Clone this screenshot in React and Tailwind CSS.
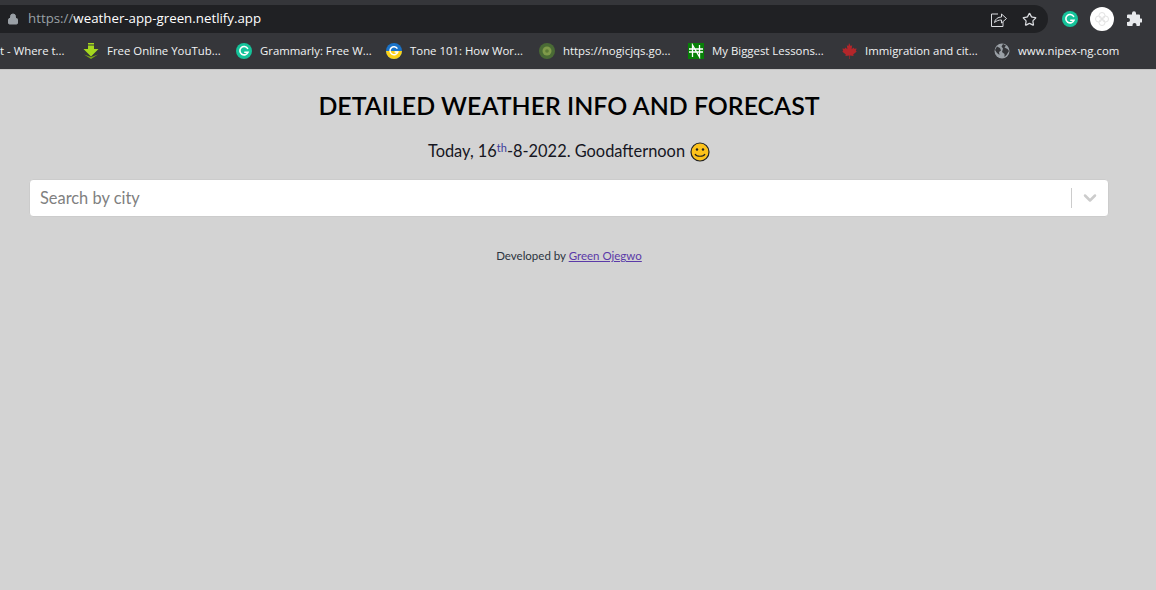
import { Lock, Star, ChevronDown } from "lucide-react";

const Grammarly = ({ size = 16 }) => (
  <svg width={size} height={size} viewBox="0 0 16 16">
    <circle cx="8" cy="8" r="8" fill="#15c39a" />
    <path d="M11.6 5.4A4.2 4.2 0 1 0 12 9.2H8.8" fill="none" stroke="#fff" strokeWidth="1.6" strokeLinecap="round" />
  </svg>
);

const Tone = () => (
  <svg width="16" height="16" viewBox="0 0 16 16">
    <circle cx="8" cy="8" r="8" fill="#1a73c8" />
    <path d="M0 8h16a8 8 0 0 1-16 0z" fill="#fcd116" />
    <path d="M11.4 5.6A4 4 0 1 0 11.8 9H8.6" fill="none" stroke="#fff" strokeWidth="1.5" />
  </svg>
);

const Download = () => (
  <svg width="16" height="16" viewBox="0 0 16 16">
    <path d="M5 0h6v1.500H5zM5 2.500h6V6h4.500L8 13.500.500 6H5z" fill="#a5d81e" />
    <path d="M1 11.500L8 16l7-4.500L8 14z" fill="#7ba814" />
  </svg>
);

const Kiwi = () => (
  <svg width="16" height="16" viewBox="0 0 16 16">
    <circle cx="8" cy="8" r="8" fill="#4a6b35" />
    <circle cx="8" cy="8" r="4.500" fill="#7f9a4a" />
    <circle cx="8" cy="8" r="1.800" fill="#5c7a36" />
  </svg>
);

const Naira = () => (
  <svg width="16" height="16" viewBox="0 0 16 16">
    <rect width="16" height="16" fill="#078007" />
    <path d="M4.500 14V2l7 12V2M1 6h14M1 9h14" fill="none" stroke="#fff" strokeWidth="1.300" />
  </svg>
);

const Maple = () => (
  <svg width="16" height="16" viewBox="0 0 16 16">
    <path d="M8 0l1.600 3 1.600-.8-.6 4 2-1.800.6 1.400 2.400-.4-.8 2.600 1 .6-3.600 3 .4 1.400-3.800-.5V16h-.6v-3.500l-3.800.5.400-1.400-3.600-3 1-.6-.8-2.600 2.400.4.600-1.400 2 1.800-.6-4 1.600.8z" fill="#b3262a" />
  </svg>
);

const Globe = () => (
  <svg width="16" height="16" viewBox="0 0 16 16">
    <circle cx="8" cy="8" r="7.500" fill="#9aa0a6" />
    <path d="M3 3.500l3 1.500 1 2.500-2 1.500.5 3L3 10 1 7zM9 1l3 1.500-1.500 2 3 1.500 1.500 2-2.500 4-2 2V11L8 9l1-3.500-1.500-2z" fill="#35363a" />
  </svg>
);

const Extensions = () => (
  <svg width="16" height="16" viewBox="0 0 16 16" fill="#e8eaed">
    <path d="M6 2.200a2 2 0 0 1 4 0V3.500h3a1 1 0 0 1 1 1v3h1a2 2 0 0 1 0 4h-1V14a1 1 0 0 1-1 1h-2.500v-1a2 2 0 0 0-4 0v1H2a1 1 0 0 1-1-1v-3h1a2 2 0 0 0 0-4H1V4.500a1 1 0 0 1 1-1h4z" />
  </svg>
);

const bookmarks = [
  { icon: <Download />, label: "Free Online YouTub...", w: "w-[113px]" },
  { icon: <Grammarly />, label: "Grammarly: Free W...", w: "w-[110px]" },
  { icon: <Tone />, label: "Tone 101: How Wor...", w: "w-[113px]" },
  { icon: <Kiwi />, label: "https://nogicjqs.go...", w: "w-[109px]" },
  { icon: <Naira />, label: "My Biggest Lessons...", w: "w-[113px]" },
  { icon: <Maple />, label: "Immigration and cit...", w: "w-[113px]" },
  { icon: <Globe />, label: "www.nipex-ng.com", w: "w-[101px]" },
];

export default function App() {
  return (
    <div className="min-h-[590px] bg-[#d3d3d3]">
      {/* Browser chrome */}
      <div className="h-[69px] bg-[#35363a] font-['Open_Sans',sans-serif] text-white">
        <div className="h-[36px] pt-[5px] flex items-start">
          <div className="w-[1048px] h-[28px] bg-[#202124] rounded-r-[14px] flex items-center pl-[7px] pr-[11px] text-[13.300px]">
            <Lock size={12} className="text-[#9aa0a6] fill-[#9aa0a6] mr-[9px]" />
            <span className="text-[#9aa0a6]">https://</span>
            <span>weather-app-green.netlify.app</span>
            <div className="ml-auto flex items-center gap-[15px] text-[#dadce0]">
              <svg width="17" height="17" viewBox="0 0 17 17" fill="none" stroke="currentColor" strokeWidth="1">
                <path d="M8 3H1.500v12.500H13V11" />
                <path d="M4.500 11.500c.5-3.500 3.500-5.500 7-5.500V3l5 4.500-5 4.500V9c-3 0-5 .8-7 2.500z" />
              </svg>
              <Star size={15} strokeWidth={2} />
            </div>
          </div>
          <div className="flex items-center h-[28px] ml-[14px]">
            <Grammarly size={16} />
            <div className="w-[24px] h-[24px] rounded-full bg-white ml-[12px] flex items-center justify-center">
              <svg width="16" height="16" viewBox="0 0 16 16" fill="none" stroke="#e3e3e3" strokeWidth="1">
                <circle cx="8" cy="4.500" r="3" />
                <circle cx="8" cy="11.500" r="3" />
                <circle cx="4.500" cy="8" r="3" />
                <circle cx="11.500" cy="8" r="3" />
              </svg>
            </div>
            <div className="ml-[12px] flex">
              <Extensions />
            </div>
          </div>
        </div>
        <div className="h-[30px] flex items-center text-[11.400px] whitespace-nowrap overflow-hidden">
          <span className="w-[67px] mr-[16px] text-[#f1f3f4]">t - Where t...</span>
          {bookmarks.map((b) => (
            <div key={b.label} className="flex items-center gap-[8px] mr-[16px] shrink-0">
              {b.icon}
              <span className={`${b.w} text-[#f1f3f4]`}>{b.label}</span>
            </div>
          ))}
        </div>
      </div>
      <div className="h-px bg-[#c4c4c4]" />

      {/* Page */}
      <div className="font-['Lato',sans-serif] px-[29px] pr-[47px]">
        <h1 className="mt-[17px] text-center text-[24.900px] leading-[36px] font-semibold text-black">
          DETAILED WEATHER INFO AND FORECAST
        </h1>
        <p className="mt-[15px] h-[27px] flex items-center justify-center text-[16.400px] text-[#16161f]">
          <span>
            Today, 16<sup className="text-[11px] text-[#3a3a9a]">th</sup>-8-2022. Goodafternoon
          </span>
          <svg className="ml-[5px]" width="20" height="20" viewBox="0 0 20 20">
            <circle cx="10" cy="10" r="9" fill="#fcc21b" stroke="#222" strokeWidth="1.200" />
            <circle cx="7" cy="7.500" r="1.200" fill="#222" />
            <circle cx="13" cy="7.500" r="1.200" fill="#222" />
            <path d="M5 12c1.500 3 8.500 3 10 0" fill="none" stroke="#222" strokeWidth="1.200" />
          </svg>
        </p>
        <div className="mt-[14px] h-[38px] bg-white rounded border border-[#cccccc] flex items-center pl-[10px] pr-[8px]">
          <span className="text-[16.400px] text-[#808080]">Search by city</span>
          <div className="ml-auto w-px h-[20px] bg-[#cccccc]" />
          <ChevronDown size={20} strokeWidth={3} className="ml-[8px] text-[#cccccc]" />
        </div>
        <p className="mt-[31px] text-center text-[11.500px] leading-[16px] text-[#2b3440]">
          Developed by <a href="#" className="underline text-[#5b3aa8]">Green Ojegwo</a>
        </p>
      </div>
    </div>
  );
}
